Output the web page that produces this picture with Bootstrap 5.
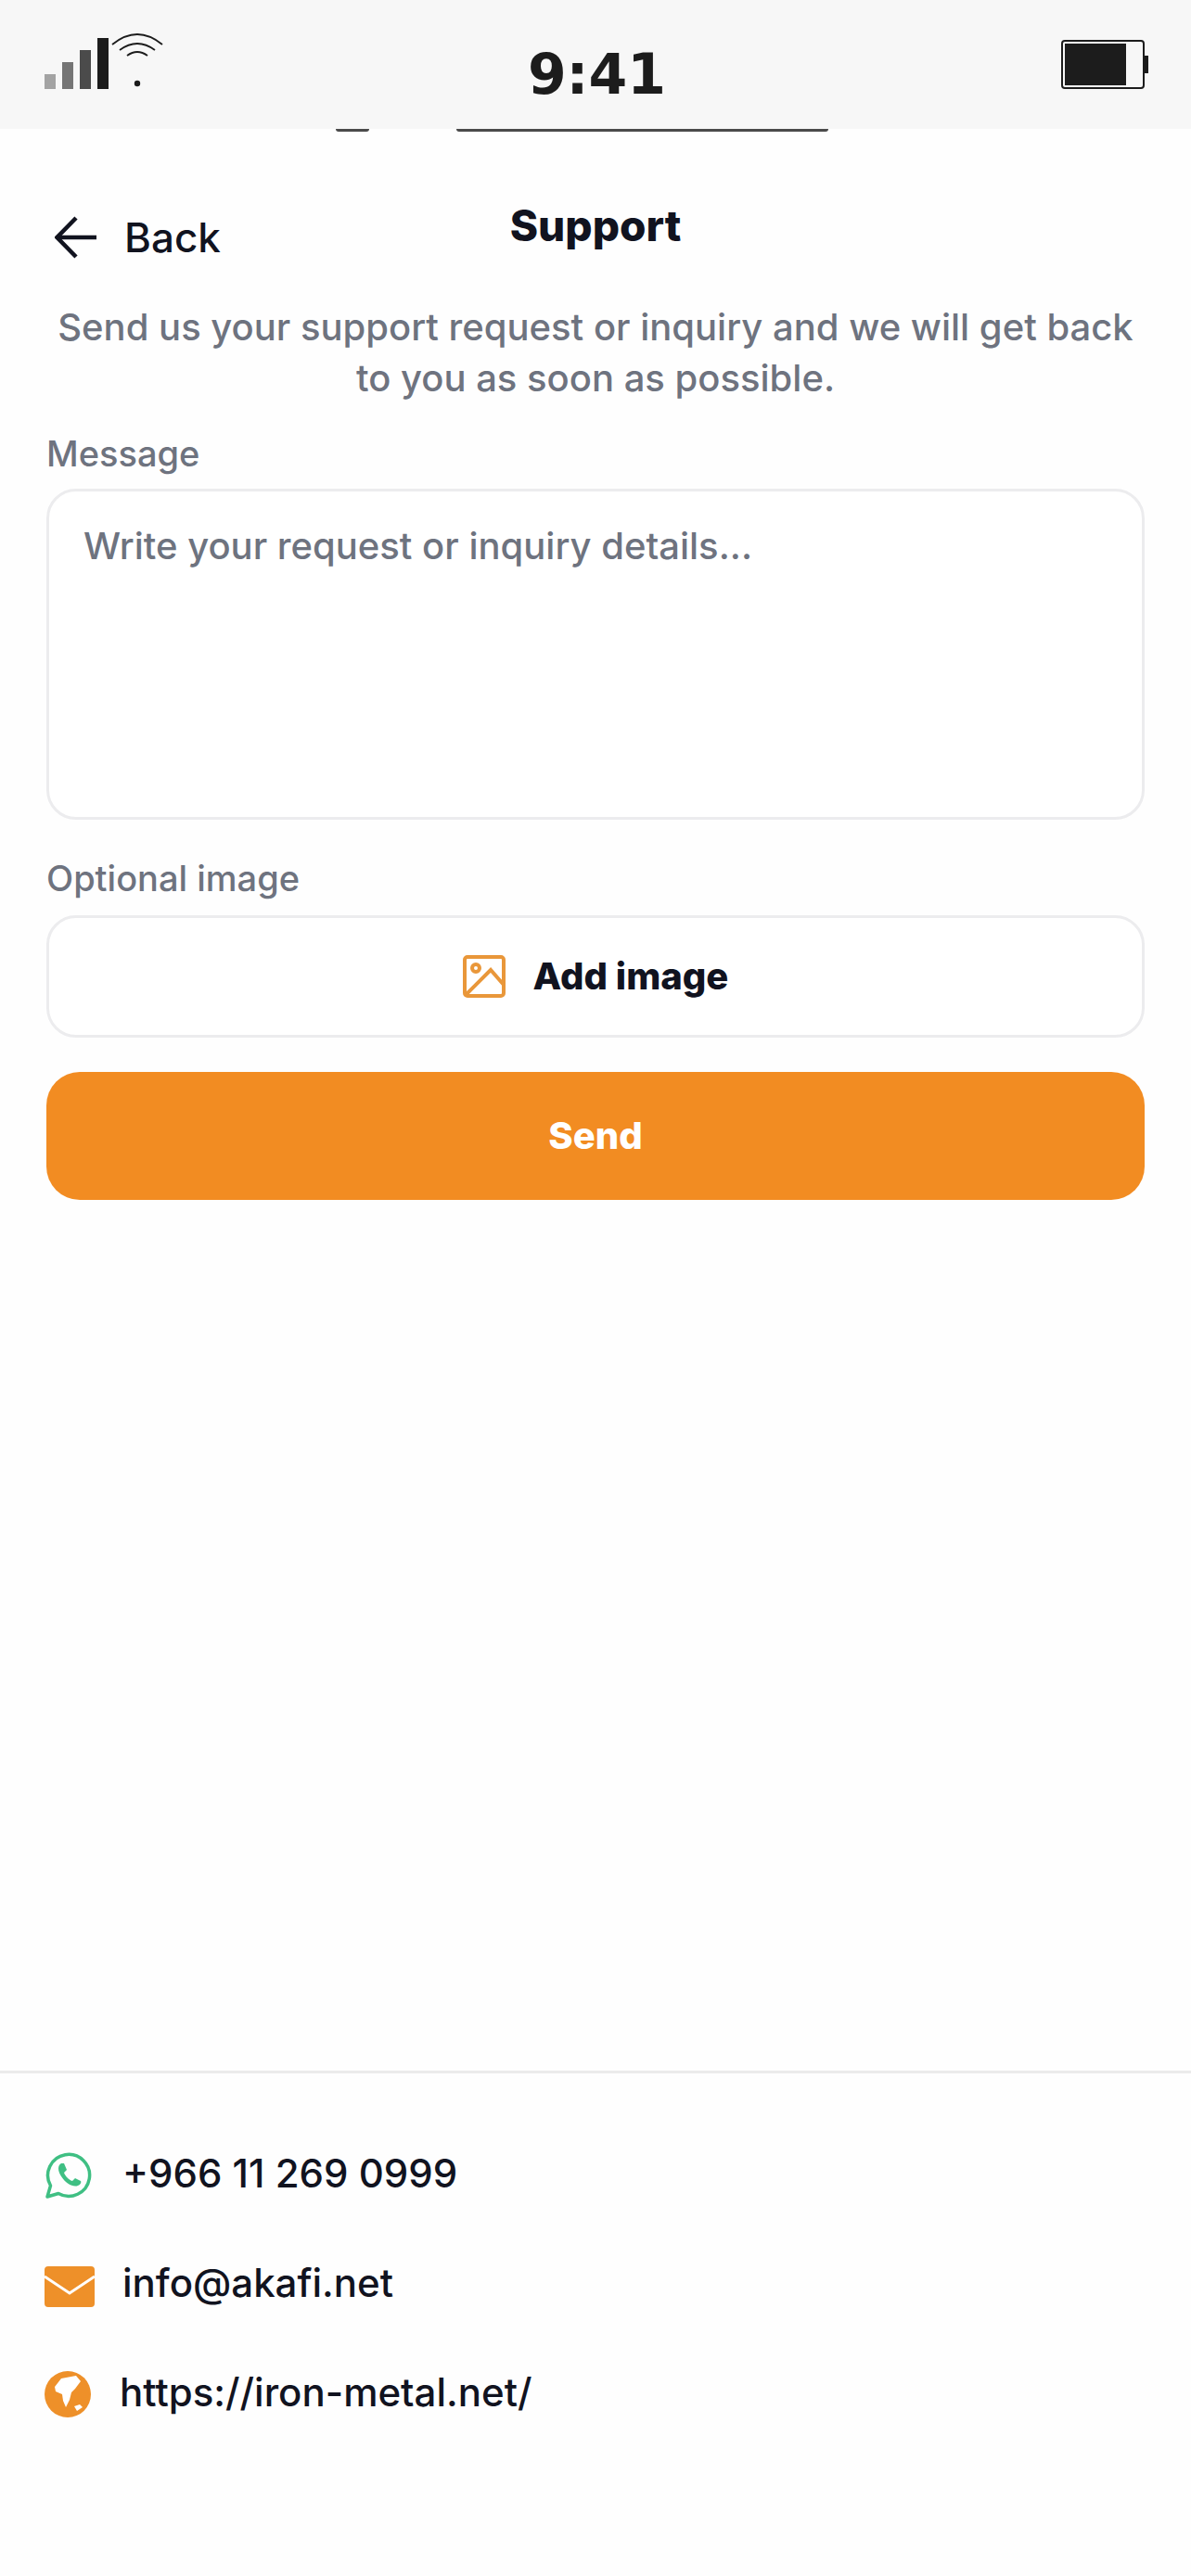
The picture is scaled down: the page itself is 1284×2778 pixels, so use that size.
<!DOCTYPE html>
<html lang="en">
<head>
    <meta charset="UTF-8">
    <meta name="viewport" content="width=device-width, initial-scale=1.0">
    <title>Support</title>
    <link href="https://cdn.jsdelivr.net/npm/bootstrap@5.3.3/dist/css/bootstrap.min.css" rel="stylesheet">
    <style>
        body {
            width: 1284px;
            height: 2778px;
            background-color: #fefefe;
            font-family: Inter, "Liberation Sans", sans-serif;
            color: #11131f;
        }
        .status-bar {
            height: 139px;
            background-color: #f7f7f7;
            padding: 0 45px 0 48px;
        }
        .status-left {
            width: 200px;
            padding-top: 36px;
        }
        .status-time {
            font-family: "DejaVu Sans", sans-serif;
            font-weight: 700;
            font-size: 60px;
            line-height: 70px;
            color: #1c1c1c;
            padding-top: 45px;
        }
        .status-right {
            width: 200px;
            padding-top: 43px;
        }
        .notch-edge {
            top: 139px;
            height: 3px;
            background-color: #4a4a4a;
            border-radius: 0 0 12px 12px;
        }
        .notch-a { left: 362px; width: 36px; }
        .notch-b { left: 492px; width: 401px; }
        .top-row {
            height: 140px;
            padding: 0 50px;
        }
        .back-link {
            top: 90px;
            left: 59px;
            font-size: 44px;
            font-weight: 500;
            line-height: 54px;
            gap: 29px;
            color: #11131f;
            text-decoration: none;
        }
        .page-title {
            font-size: 46px;
            font-weight: 800;
            line-height: 56px;
            margin: 0;
            padding-top: 76px;
        }
        .page-intro {
            font-size: 40px;
            font-weight: 500;
            line-height: 55px;
            color: #6e737f;
            margin: 46px 0 0;
            padding: 0 50px;
        }
        .support-form {
            padding: 0 50px;
        }
        .field-label {
            font-size: 38px;
            font-weight: 500;
            line-height: 46px;
            color: #6e737f;
            margin: 0;
        }
        .form-control.message-input {
            display: block;
            height: 357px;
            margin-top: 15px;
            padding: 32px 37px;
            border: 3px solid #ececee;
            border-radius: 32px;
            font-size: 40px;
            font-weight: 500;
            line-height: 54px;
            resize: none;
        }
        .form-control.message-input::placeholder {
            color: #6e737f;
            opacity: 1;
        }
        .btn.add-image {
            height: 132px;
            margin-top: 17px;
            border: 3px solid #ececee;
            border-radius: 32px;
            background-color: #fff;
            color: #11131f;
            font-size: 40px;
            font-weight: 800;
            gap: 30px;
        }
        .btn.send-btn {
            height: 138px;
            margin-top: 37px;
            border: 0;
            border-radius: 36px;
            background-color: #f28c22;
            color: #fff;
            font-size: 40px;
            font-weight: 800;
        }
        .contact-footer {
            height: 545px;
            border-top: 3px solid #ebebeb;
            padding: 81px 0 0 48px;
        }
        .contact-row {
            height: 53px;
            font-size: 42px;
            font-weight: 500;
            line-height: 53px;
            margin-bottom: 65px;
        }
        .contact-icon {
            width: 84px;
            flex-shrink: 0;
        }
    </style>
</head>
<body class="d-flex flex-column position-relative">

    <!-- Barra de estado -->
    <div class="status-bar d-flex justify-content-between">
        <div class="status-left">
            <svg width="135" height="62" viewBox="0 0 135 62">
                <rect x="0" y="44" width="12" height="16" fill="#a3a3a3"/>
                <rect x="19" y="31" width="12" height="29" fill="#757575"/>
                <rect x="38" y="18" width="12" height="42" fill="#4b4b4b"/>
                <rect x="57" y="5" width="12" height="55" fill="#1c1c1c"/>
                <g fill="none" stroke="#1c1c1c" stroke-width="1.8">
                    <path d="M73 12 Q100 -10 127 12"/>
                    <path d="M81 18 Q100 4 119 18"/>
                    <path d="M89 24 Q100 16 111 24"/>
                </g>
                <circle cx="100" cy="54" r="3.2" fill="#1c1c1c"/>
            </svg>
        </div>
        <div class="status-time">9:41</div>
        <div class="status-right d-flex justify-content-end">
            <svg width="95" height="53" viewBox="0 0 95 53">
                <rect x="1" y="1" width="88" height="51" rx="3" fill="none" stroke="#1c1c1c" stroke-width="2"/>
                <rect x="4" y="4" width="66" height="45" fill="#1c1c1c"/>
                <rect x="90" y="17" width="4" height="19" fill="#1c1c1c"/>
            </svg>
        </div>
    </div>
    <div class="notch-edge notch-a position-absolute"></div>
    <div class="notch-edge notch-b position-absolute"></div>

    <!-- Cabecera -->
    <div class="top-row position-relative text-center">
        <a href="#" class="back-link position-absolute d-flex align-items-center">
            <svg width="46" height="46" viewBox="0 0 46 46" fill="none" stroke="#11131f" stroke-width="4.5">
                <path d="M45 23H3"/>
                <path d="M23 2 2.500 23 23 44"/>
            </svg>
            <span>Back</span>
        </a>
        <h1 class="page-title">Support</h1>
    </div>

    <p class="page-intro text-center">Send us your support request or inquiry and we will get back to you as soon as possible.</p>

    <!-- Formulario -->
    <form class="support-form d-flex flex-column">
        <label class="field-label" for="msg" style="margin-top:31px">Message</label>
        <textarea id="msg" class="form-control message-input" placeholder="Write your request or inquiry details..."></textarea>
        <label class="field-label" style="margin-top:40px">Optional image</label>
        <button type="button" class="btn add-image d-flex align-items-center justify-content-center">
            <svg width="46" height="46" viewBox="0 0 46 46" fill="none" stroke="#e9973a" stroke-width="4">
                <rect x="2" y="2" width="42" height="42" rx="3"/>
                <circle cx="14" cy="14" r="4"/>
                <path d="M4 42 30 16 44 32"/>
            </svg>
            <span>Add image</span>
        </button>
        <button type="button" class="btn send-btn">Send</button>
    </form>

    <!-- Contacto -->
    <div class="contact-footer mt-auto">
        <div class="contact-row d-flex align-items-center">
            <div class="contact-icon">
                <svg width="52" height="52" viewBox="0 0 52 52">
                    <path d="M3 49 6.500 37A22.500 22.500 0 1 1 15 45.500Z" fill="none" stroke="#3fbf83" stroke-width="3.500" stroke-linejoin="round"/>
                    <path d="M18 13C14 15 14 21 18 27 23 35 31 39 36 37 39 36 40 33 39 32L33 29 30 32C26 31 22 26 21 23L24 20 21 13Z" fill="#3fbf83"/>
                </svg>
            </div>
            <span>+966 11 269 0999</span>
        </div>
        <div class="contact-row d-flex align-items-center">
            <div class="contact-icon">
                <svg width="54" height="44" viewBox="0 0 54 44">
                    <rect x="0" y="0" width="54" height="44" rx="4" fill="#ee9029"/>
                    <path d="M0 11 27 29 54 11" fill="none" stroke="#fff" stroke-width="3"/>
                </svg>
            </div>
            <span>info@akafi.net</span>
        </div>
        <div class="contact-row d-flex align-items-center">
            <div class="contact-icon" style="width:81px">
                <svg width="50" height="50" viewBox="0 0 50 50">
                    <circle cx="25" cy="25" r="25" fill="#ee9029"/>
                    <path d="M11 17 18 8 34 5 39 11 33 19 29 23 27 31 23 39 20 32 19 25 12 22Z" fill="#fff"/>
                    <path d="M32 38 38 36 41 39 35 43Z" fill="#fff"/>
                </svg>
            </div>
            <span>https://iron-metal.net/</span>
        </div>
    </div>

    <script src="https://cdn.jsdelivr.net/npm/bootstrap@5.3.3/dist/js/bootstrap.bundle.min.js"></script>
</body>
</html>
